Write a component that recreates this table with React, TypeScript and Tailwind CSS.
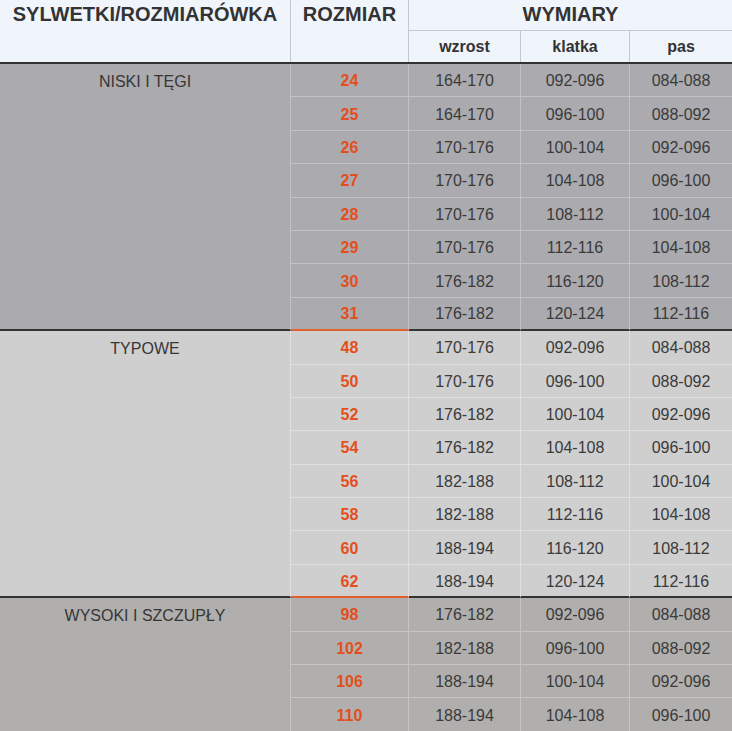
import React from "react";

type Row = [string, string, string, string];

type Section = {
  name: string;
  bg: string;
  line: string;
  last: boolean;
  rows: Row[];
};

const SECTIONS: Section[] = [
  {
    name: "NISKI I TĘGI",
    bg: "bg-[#abaaae]",
    line: "border-[#c3c2c6]",
    last: false,
    rows: [
      ["24", "164-170", "092-096", "084-088"],
      ["25", "164-170", "096-100", "088-092"],
      ["26", "170-176", "100-104", "092-096"],
      ["27", "170-176", "104-108", "096-100"],
      ["28", "170-176", "108-112", "100-104"],
      ["29", "170-176", "112-116", "104-108"],
      ["30", "176-182", "116-120", "108-112"],
      ["31", "176-182", "120-124", "112-116"],
    ],
  },
  {
    name: "TYPOWE",
    bg: "bg-[#cfcfcf]",
    line: "border-[#e0e0e0]",
    last: false,
    rows: [
      ["48", "170-176", "092-096", "084-088"],
      ["50", "170-176", "096-100", "088-092"],
      ["52", "176-182", "100-104", "092-096"],
      ["54", "176-182", "104-108", "096-100"],
      ["56", "182-188", "108-112", "100-104"],
      ["58", "182-188", "112-116", "104-108"],
      ["60", "188-194", "116-120", "108-112"],
      ["62", "188-194", "120-124", "112-116"],
    ],
  },
  {
    name: "WYSOKI I SZCZUPŁY",
    bg: "bg-[#b1afad]",
    line: "border-[#c7c5c3]",
    last: true,
    rows: [
      ["98", "176-182", "092-096", "084-088"],
      ["102", "182-188", "096-100", "088-092"],
      ["106", "188-194", "100-104", "092-096"],
      ["110", "188-194", "104-108", "096-100"],
    ],
  },
];

function SizeSection({ s }: { s: Section }) {
  return (
    <div className={`flex ${s.bg}`}>
      {/* sylwetka */}
      <div
        className={`w-[291px] shrink-0 border-r ${s.line} ${
          s.last ? "" : "border-b-2 border-b-[#333333]"
        }`}
      >
        <div className="pt-[1px] text-center text-[16px] leading-[33px] text-[#363636]">{s.name}</div>
      </div>
      {/* rows */}
      <div className="flex-1">
        {s.rows.map((r, i) => {
          const end = i === s.rows.length - 1 && !s.last;
          const bottom = end ? "border-b-2 border-b-[#333333]" : `border-b ${s.line}`;
          return (
            <div key={r[0]} className="grid grid-cols-[118px_112px_109px_1fr] text-[16px] text-[#3a3a3a]">
              <div
                className={`flex h-[33.4px] items-center justify-center border-r ${s.line} pt-[2px] font-bold text-[#e24f1d] ${
                  end ? "border-b-2 border-b-[#e2602c]" : `border-b ${s.line}`
                }`}
              >
                {r[0]}
              </div>
              <div className={`flex h-[33.4px] items-center justify-center border-r ${s.line} ${bottom} pt-[2px]`}>
                {r[1]}
              </div>
              <div className={`flex h-[33.4px] items-center justify-center border-r ${s.line} ${bottom} pt-[2px]`}>
                {r[2]}
              </div>
              <div className={`flex h-[33.4px] items-center justify-center ${bottom} pt-[2px]`}>{r[3]}</div>
            </div>
          );
        })}
      </div>
    </div>
  );
}

export default function App() {
  return (
    <div className="h-[731px] w-[732px] overflow-hidden bg-white font-['Liberation_Sans',Arial,sans-serif]">
      {/* ── Header ── */}
      <div className="flex h-[64px] border-b-2 border-[#333333] bg-[#f0f5fb] text-[#333333]">
        <div className="w-[291px] shrink-0 border-r border-[#c3c9d0] text-center text-[20px] font-bold leading-[28px]">
          SYLWETKI/ROZMIARÓWKA
        </div>
        <div className="w-[118px] shrink-0 border-r border-[#c3c9d0] text-center text-[20px] font-bold leading-[28px]">
          ROZMIAR
        </div>
        <div className="flex flex-1 flex-col">
          <div className="h-[31px] border-b border-[#c3c9d0] text-center text-[20px] font-bold leading-[28px]">
            WYMIARY
          </div>
          <div className="grid flex-1 grid-cols-[112px_109px_1fr] text-[16px] font-bold">
            <div className="flex items-center justify-center border-r border-[#c3c9d0] pt-[1px]">wzrost</div>
            <div className="flex items-center justify-center border-r border-[#c3c9d0] pt-[1px]">klatka</div>
            <div className="flex items-center justify-center pt-[1px]">pas</div>
          </div>
        </div>
      </div>

      {/* ── Body ── */}
      {SECTIONS.map((s) => (
        <SizeSection key={s.name} s={s} />
      ))}
    </div>
  );
}
